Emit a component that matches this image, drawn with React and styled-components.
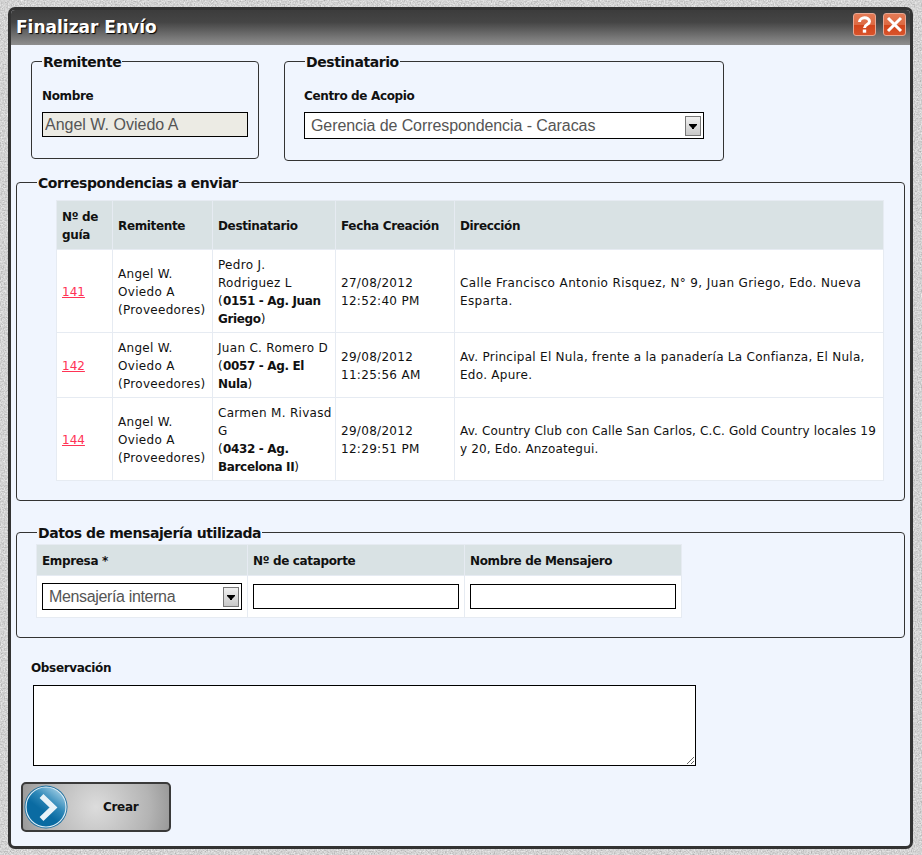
import React from 'react'
import styled, { createGlobalStyle } from 'styled-components'

const rows = [
  {
    id: '141',
    fecha: '27/08/2012',
    hora: '12:52:40 PM',
    nombre: ['Pedro J.', 'Rodriguez L'],
    ag: '0151 - Ag. Juan Griego',
    dir: 'Calle Francisco Antonio Risquez, N° 9, Juan Griego, Edo. Nueva Esparta.',
    dirSpacing: 0.38,
  },
  {
    id: '142',
    fecha: '29/08/2012',
    hora: '11:25:56 AM',
    nombre: ['Juan C. Romero D'],
    ag: '0057 - Ag. El Nula',
    dir: 'Av. Principal El Nula, frente a la panadería La Confianza, El Nula, Edo. Apure.',
    dirSpacing: 0.27,
  },
  {
    id: '144',
    fecha: '29/08/2012',
    hora: '12:29:51 PM',
    nombre: ['Carmen M. Rivasd', 'G'],
    ag: '0432 - Ag. Barcelona II',
    dir: 'Av. Country Club con Calle San Carlos, C.C. Gold Country locales 19 y 20, Edo. Anzoategui.',
    dirSpacing: 0.15,
  },
]

function SelectField({ w, spacing, children }) {
  return (
    <SelectWrap $w={w}>
      <Select $spacing={spacing} defaultValue={children}>
        <option>{children}</option>
      </Select>
      <ArrowBox>
        <svg width="8" height="5" viewBox="0 0 8 5">
          <path d="M0 0h8v1L5 4v1H3V4L0 1z" fill="#000" />
        </svg>
      </ArrowBox>
    </SelectWrap>
  )
}

export default function App() {
  return (
    <Page>
      <GlobalStyle />
      <Grain width="922" height="855">
        <filter id="grain">
          <feTurbulence type="fractalNoise" baseFrequency="0.7" numOctaves="2" seed="4" />
          <feColorMatrix type="saturate" values="0" />
          <feComponentTransfer>
            <feFuncR type="linear" slope="0.8" intercept="0.25" />
            <feFuncG type="linear" slope="0.8" intercept="0.25" />
            <feFuncB type="linear" slope="0.8" intercept="0.25" />
            <feFuncA type="linear" slope="0" intercept="1" />
          </feComponentTransfer>
        </filter>
        <rect width="922" height="855" filter="url(#grain)" />
      </Grain>
      <Window>
        <TitleBar>
          <Title>Finalizar Envío</Title>
          <TitleButtons>
            <TitleButton>
              <svg width="21" height="21" viewBox="0 0 21 21">
                <path d="M5.5 8C5.5 2.5 15.5 2.5 15.5 7.5C15.5 10.8 10.5 10.3 10.5 14" fill="none" stroke="#fff" strokeWidth="3" />
                <rect x="8.8" y="15.5" width="3.4" height="3.2" fill="#fff" />
              </svg>
            </TitleButton>
            <TitleButton>
              <svg width="21" height="21" viewBox="0 0 21 21">
                <path d="M4 4L17 17M17 4L4 17" fill="none" stroke="#fff" strokeWidth="3" />
              </svg>
            </TitleButton>
          </TitleButtons>
        </TitleBar>
        <Content>
          <TopRow>
            <RemitenteBox>
              <Legend>Remitente</Legend>
              <FieldLabel>Nombre</FieldLabel>
              <ReadOnlyInput readOnly value="Angel W. Oviedo A" />
            </RemitenteBox>
            <DestinoBox>
              <Legend $x={1}>Destinatario</Legend>
              <FieldLabel>Centro de Acopio</FieldLabel>
              <SelectField w={400} spacing={-0.08}>Gerencia de Correspondencia - Caracas</SelectField>
            </DestinoBox>
          </TopRow>

          <EnviosBox>
            <Legend $x={-19}>Correspondencias a enviar</Legend>
            <EnviosTable>
              <colgroup>
                <col width="55" />
                <col width="99" />
                <col width="122" />
                <col width="118" />
                <col />
              </colgroup>
              <thead>
                <tr>
                  <Th>Nº de guía</Th>
                  <Th>Remitente</Th>
                  <Th>Destinatario</Th>
                  <Th>Fecha Creación</Th>
                  <Th>Dirección</Th>
                </tr>
              </thead>
              <tbody>
                {rows.map((r) => (
                  <tr key={r.id}>
                    <Td><GuiaLink href="#">{r.id}</GuiaLink></Td>
                    <Td>Angel W. Oviedo A (Proveedores)</Td>
                    <Td>
                      {r.nombre.map((n) => <NameLine key={n}>{n}</NameLine>)}
                      (<b>{r.ag}</b>)
                    </Td>
                    <Td>{r.fecha}<br />{r.hora}</Td>
                    <DirTd $spacing={r.dirSpacing}>{r.dir}</DirTd>
                  </tr>
                ))}
              </tbody>
            </EnviosTable>
          </EnviosBox>

          <MensajeriaBox>
            <Legend $x={1}>Datos de mensajería utilizada</Legend>
            <MensajeriaTable>
              <colgroup>
                <col width="210" />
                <col width="216" />
                <col width="216" />
              </colgroup>
              <thead>
                <tr>
                  <Th>Empresa *</Th>
                  <Th>Nº de cataporte</Th>
                  <Th>Nombre de Mensajero</Th>
                </tr>
              </thead>
              <tbody>
                <tr>
                  <FormTd>
                    <SelectField w={200} spacing={-0.35}>Mensajería interna</SelectField>
                  </FormTd>
                  <FormTd><TextInput /></FormTd>
                  <FormTd><TextInput /></FormTd>
                </tr>
              </tbody>
            </MensajeriaTable>
          </MensajeriaBox>

          <ObsLabel>Observación</ObsLabel>
          <ObsText />

          <CrearButton>
            <ArrowCircle>
              <svg width="46" height="46" viewBox="0 0 46 46">
                <defs>
                  <linearGradient id="orb" x1="0.85" y1="0.05" x2="0.3" y2="0.8">
                    <stop offset="0" stopColor="#a5d0e6" />
                    <stop offset="0.45" stopColor="#2f88b8" />
                    <stop offset="0.75" stopColor="#0a6ba2" />
                    <stop offset="1" stopColor="#0a6ba2" />
                  </linearGradient>
                </defs>
                <circle cx="23" cy="23" r="21.5" fill="#1d6f9f" />
                <circle cx="23" cy="23" r="20" fill="url(#orb)" stroke="#dcecf5" strokeWidth="1.2" />
                <path d="M18.5 12L30.5 23.5L18.5 35" fill="none" stroke="#e8f2f8" strokeWidth="5.5" />
              </svg>
            </ArrowCircle>
            <CrearText>Crear</CrearText>
          </CrearButton>
        </Content>
      </Window>
    </Page>
  )
}

const GlobalStyle = createGlobalStyle`
  html, body {
    margin: 0;
    padding: 0;
  }
  body {
    font-family: "DejaVu Sans", Verdana, sans-serif;
    background-color: #a9a9a9;
  }
`

const Page = styled.div`
  position: relative;
  width: 922px;
  height: 855px;
  padding: 7px 0 0 8px;
  box-sizing: border-box;
  overflow: hidden;
`

const Grain = styled.svg`
  position: absolute;
  top: 0;
  left: 0;
`

const Window = styled.div`
  position: relative;
  width: 905px;
  height: 842px;
  box-sizing: border-box;
  border: 3px solid #333;
  border-radius: 7px;
  background: #f0f5fe;
  overflow: hidden;
`

const TitleBar = styled.div`
  height: 35px;
  display: flex;
  align-items: center;
  justify-content: space-between;
  padding: 0 4px 0 5px;
  background: linear-gradient(to bottom, #3c3c3c 0%, #454545 35%, #8f8f8f 100%);
`

const Title = styled.div`
  margin-top: -2px;
  font-size: 17px;
  font-weight: bold;
  color: #fff;
  text-shadow: 1px 1px 1px #000;
`

const TitleButtons = styled.div`
  align-self: flex-start;
  margin-top: 3px;
  display: flex;
  gap: 7px;
`

const TitleButton = styled.div`
  width: 23px;
  height: 23px;
  box-sizing: border-box;
  display: flex;
  align-items: center;
  justify-content: center;
  border: 1px solid #e8a793;
  border-radius: 3px;
  background: linear-gradient(to bottom, #e47a55 0%, #dd6a43 50%, #d2441a 52%, #d9532b 100%);
`

const Content = styled.div`
  padding: 6px 0 0 5px;
`

const TopRow = styled.div`
  display: flex;
  align-items: flex-start;
  gap: 25px;
  padding-left: 15px;
`

const Box = styled.fieldset`
  margin: 0;
  box-sizing: border-box;
  border: 1px solid #333;
  border-radius: 4px;
  min-width: 0;
`

const RemitenteBox = styled(Box)`
  width: 228px;
  height: 108px;
  padding: 17px 10px 0;
`

const DestinoBox = styled(Box)`
  width: 440px;
  height: 110px;
  padding: 17px 19px 0;
`

const EnviosBox = styled(Box)`
  width: 889px;
  height: 329px;
  margin-top: 11px;
  padding: 8px 0 0 39px;
`

const MensajeriaBox = styled(Box)`
  width: 889px;
  height: 116px;
  margin-top: 21px;
  padding: 2px 0 0 19px;
`

const Legend = styled.legend`
  position: relative;
  top: 1px;
  margin-left: ${(p) => p.$x || 0}px;
  padding: 0 1px;
  font-size: 14px;
  font-weight: bold;
  letter-spacing: -0.42px;
  color: #111;
  line-height: 20px;
`

const FieldLabel = styled.div`
  font-size: 12px;
  font-weight: bold;
  letter-spacing: -0.35px;
  color: #111;
  line-height: 16px;
  margin-bottom: 8px;
`

const ReadOnlyInput = styled.input`
  display: block;
  width: 206px;
  height: 25px;
  box-sizing: border-box;
  margin: 0;
  padding: 0 0 0 2px;
  border: 1px solid #000;
  border-radius: 0;
  outline: none;
  background: #ecebe4;
  color: #555;
  font: 16px "Liberation Sans", Arial, sans-serif;
`

const SelectWrap = styled.div`
  position: relative;
  width: ${(p) => p.$w}px;
  height: 27px;
`

const Select = styled.select`
  display: block;
  width: 100%;
  height: 100%;
  box-sizing: border-box;
  margin: 0;
  padding: 0 0 0 6px;
  border: 1px solid #000;
  border-radius: 0;
  outline: none;
  appearance: none;
  background: #fff;
  color: #555;
  letter-spacing: ${(p) => p.$spacing}px;
  font: 16px "Liberation Sans", Arial, sans-serif;
`

const ArrowBox = styled.span`
  position: absolute;
  top: 4px;
  right: 3px;
  width: 16px;
  height: 20px;
  box-sizing: border-box;
  display: flex;
  align-items: center;
  justify-content: center;
  border: 1px solid #777;
  background: linear-gradient(to bottom, #f0f0f0, #c8c8c8);
`

const EnviosTable = styled.table`
  width: 828px;
  border-collapse: separate;
  border-spacing: 1px;
  table-layout: fixed;
  background: #e6ebf2;
`

const MensajeriaTable = styled(EnviosTable)`
  width: 646px;
`

const Th = styled.th`
  background: #d9e2e4;
  color: #111;
  font-size: 12px;
  font-weight: bold;
  letter-spacing: -0.35px;
  text-align: left;
  line-height: 18px;
  padding: 7px 5px 5px;
`

const Td = styled.td`
  background: #fff;
  color: #111;
  font-size: 12px;
  letter-spacing: 0.3px;
  line-height: 18px;
  padding: 6px 5px 4px;
  vertical-align: middle;

  b {
    letter-spacing: -0.35px;
  }
`

const DirTd = styled(Td)`
  letter-spacing: ${(p) => p.$spacing}px;
`

const NameLine = styled.span`
  display: block;
  white-space: nowrap;
`

const FormTd = styled(Td)`
  padding: 7px 5px;
`

const GuiaLink = styled.a`
  color: #ff3355;
  letter-spacing: 0;
`

const TextInput = styled.input`
  display: block;
  width: 206px;
  height: 25px;
  box-sizing: border-box;
  margin: 0;
  padding: 0;
  border: 1px solid #000;
  border-radius: 0;
  outline: none;
  background: #fff;
`

const ObsLabel = styled.div`
  margin: 21px 0 0 15px;
  font-size: 12px;
  font-weight: bold;
  letter-spacing: -0.35px;
  color: #111;
  line-height: 18px;
`

const ObsText = styled.textarea`
  display: block;
  width: 663px;
  height: 81px;
  box-sizing: border-box;
  margin: 8px 0 0 17px;
  padding: 0;
  border: 1px solid #000;
  border-radius: 0;
  outline: none;
  background: #fff;
`

const CrearButton = styled.div`
  width: 150px;
  height: 50px;
  box-sizing: border-box;
  margin: 16px 0 0 5px;
  display: flex;
  align-items: center;
  border: 2px solid #3a3a3a;
  border-radius: 5px;
  background: radial-gradient(circle at 50% 50%, #dcdcdc 0%, #b4b4b4 70%, #999 100%);
`

const ArrowCircle = styled.span`
  display: block;
  width: 46px;
  height: 46px;
`

const CrearText = styled.span`
  margin-left: 34px;
  font-size: 12px;
  font-weight: bold;
  letter-spacing: -0.3px;
  color: #111;
`
